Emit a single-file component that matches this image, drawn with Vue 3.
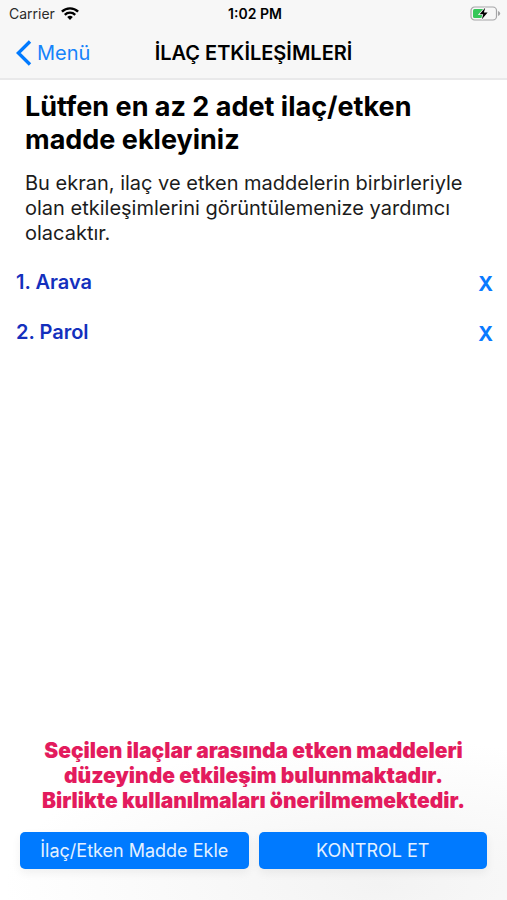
<script setup>
    import { reactive } from 'vue';

    const data = reactive({
        title: "İLAÇ ETKİLEŞİMLERİ",
        drugs: [
            {
                id: 1,
                name: "Arava"
            },
            {
                id: 2,
                name: "Parol"
            }
        ]
    });

    const removeDrug = drug => {
        data.drugs = data.drugs.filter(d => d.id != drug.id);
    };
</script>

<template>
    <div class="screen">
        <header class="top">
            <div class="status">
                <div class="carrier">
                    <span>Carrier</span>
                    <svg width="18" height="13" viewBox="0 0 18 13" aria-hidden="true">
                        <g fill="none" stroke="#000" stroke-width="2.4">
                            <path d="M0.9 4.7 A11.6 11.6 0 0 1 17.1 4.7" />
                            <path d="M3.8 7.8 A7.4 7.4 0 0 1 14.2 7.8" />
                        </g>
                        <path d="M9 13 L6.2 10.1 A4 4 0 0 1 11.8 10.1 Z" fill="#000" />
                    </svg>
                </div>
                <div class="time">1:02 PM</div>
                <div class="battery">
                    <svg width="31" height="15" viewBox="0 0 31 15" aria-hidden="true">
                        <rect x="1" y="1" width="25.5" height="13" rx="3.6" fill="none" stroke="#a5a5a7" stroke-width="1.2" />
                        <path d="M28 5 Q30.2 5.8 30.2 7.5 Q30.2 9.2 28 10 Z" fill="#a5a5a7" />
                        <path d="M4.5 3 H13 V12 H4.5 Q3 12 3 10.5 V4.5 Q3 3 4.5 3 Z" fill="#35c759" />
                        <path d="M15.2 1.7 L9.6 8.2 H13.2 L11.9 13.2 L17.6 6.6 H13.9 Z" fill="#000" stroke="#f7f7f7" stroke-width="1.6" paint-order="stroke" />
                    </svg>
                </div>
            </div>
            <nav class="nav">
                <a href="#" class="back">
                    <svg width="16" height="26" viewBox="0 0 16 26" aria-hidden="true">
                        <path d="M14 1.5 L2.3 13 L14 24.5" fill="none" stroke="#007aff" stroke-width="3.4" />
                    </svg>
                    <span>Menü</span>
                </a>
                <div class="title">{{ data.title }}</div>
            </nav>
        </header>

        <main>
            <section class="intro">
                <h1>Lütfen en az 2 adet ilaç/etken madde ekleyiniz</h1>
                <p>Bu ekran, ilaç ve etken maddelerin birbirleriyle olan etkileşimlerini görüntülemenize yardımcı olacaktır.</p>
            </section>

            <ul class="drugs">
                <li :key="d.id" v-for="(d, i) in data.drugs">
                    <span>{{ i + 1 }}. {{ d.name }}</span>
                    <button type="button" @click="removeDrug(d)">X</button>
                </li>
            </ul>
        </main>

        <footer>
            <p class="warning">
                Seçilen ilaçlar arasında etken maddeleri<br>
                düzeyinde etkileşim bulunmaktadır.<br>
                Birlikte kullanılmaları önerilmemektedir.
            </p>
            <div class="actions">
                <button type="button">İlaç/Etken Madde Ekle</button>
                <button type="button">KONTROL ET</button>
            </div>
        </footer>
    </div>
</template>

<style>
body
{
    background: #fff;
}
</style>

<style scoped>
.screen
{
    min-height: 100vh;
    display: flex;
    flex-direction: column;
    font-family: Inter, "Liberation Sans", sans-serif;
    color: #000;
}

.top
{
    background: #f7f7f7;
    border-bottom: 2px solid #e9e9ea;
}

.status
{
    display: grid;
    grid-template-columns: 1fr auto 1fr;
    align-items: center;
    height: 27px;
    padding: 0 6px 0 9px;
    font-size: 14px;
}

.carrier
{
    display: flex;
    align-items: center;
    gap: 6px;
    color: #2b2b2b;
}

.time
{
    font-weight: 600;
}

.battery
{
    display: flex;
    justify-content: flex-end;
}

.nav
{
    display: grid;
    grid-template-columns: 1fr auto 1fr;
    align-items: center;
    height: 51px;
    padding: 0 16px;
}

.back
{
    display: flex;
    align-items: center;
    gap: 5px;
    font-size: 20px;
    color: #1683fb;
    text-decoration: none;
}

.title
{
    font-size: 20px;
    font-weight: 600;
}

main
{
    flex: 1;
}

.intro
{
    padding: 10px 25px 0;
}

h1
{
    margin: 0;
    font-size: 27px;
    line-height: 33px;
    font-weight: 700;
}

.intro p
{
    margin: 15px 0 0;
    font-size: 20px;
    line-height: 25px;
    color: #1c1c1c;
}

.drugs
{
    margin: 11px 0 0;
    padding: 0;
    list-style: none;
}

.drugs li
{
    display: flex;
    align-items: center;
    justify-content: space-between;
    height: 50px;
    padding: 0 14px 0 16px;
    font-size: 20px;
    font-weight: 600;
    color: #1430bd;
}

.drugs button
{
    padding: 4px 0 0;
    border: 0;
    background: none;
    font: inherit;
    font-weight: 700;
    color: #0a7aff;
    cursor: pointer;
}

footer
{
    padding: 0 20px 31px;
    background: radial-gradient(ellipse at 75% 90%, #f3f3f3, #fff 70%);
}

.warning
{
    margin: 0 0 19px;
    font-size: 21px;
    line-height: 25px;
    font-weight: 900;
    text-align: center;
    color: #e31b5d;
}

.actions
{
    display: flex;
    gap: 10px;
}

.actions button
{
    flex: 1;
    height: 37px;
    padding: 0;
    border: 0;
    border-radius: 5px;
    background: #007aff;
    box-shadow: 0 4px 10px rgba(0, 0, 0, 0.06);
    font-family: inherit;
    font-size: 18px;
    color: #e4f1ff;
    cursor: pointer;
}
</style>
